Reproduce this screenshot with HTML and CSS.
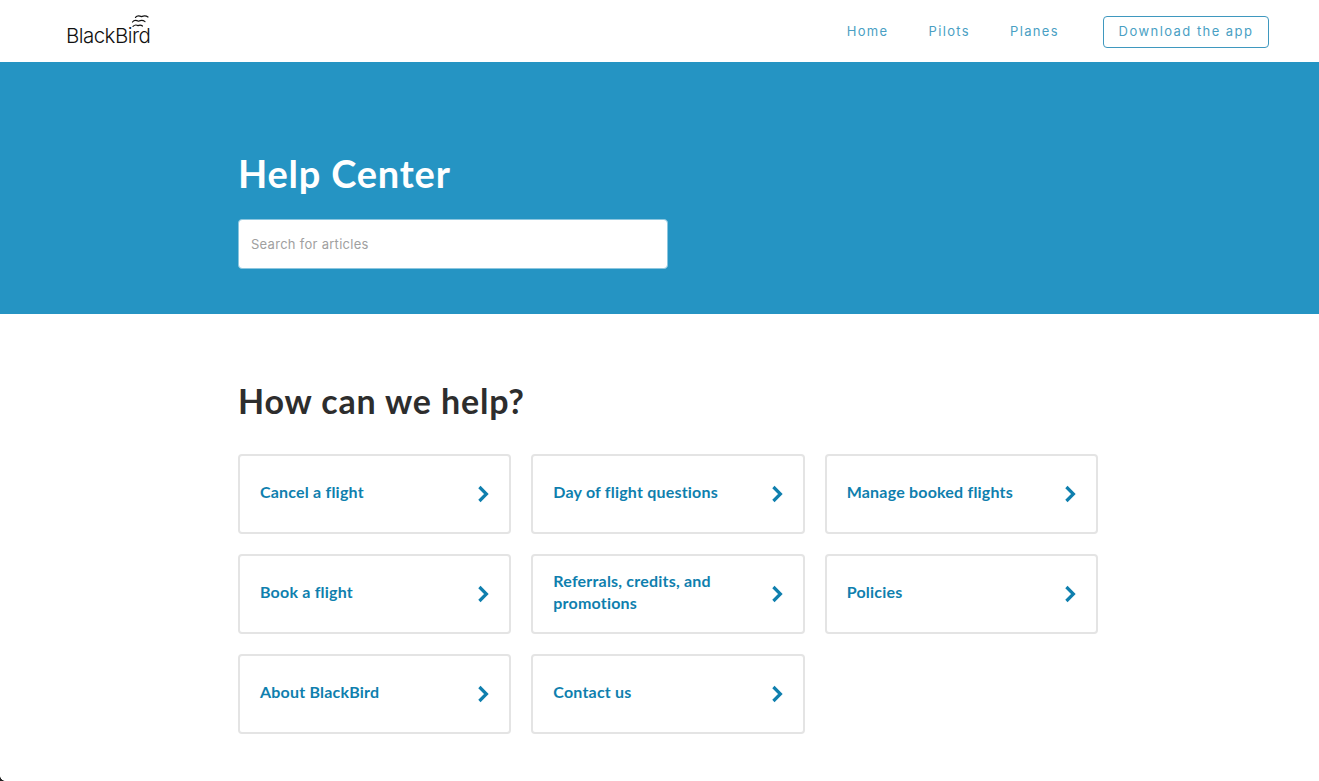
FILE: index.html
```html
<!DOCTYPE html>
<html lang="en">
<head>
<meta charset="utf-8">
<title>BlackBird Help Center</title>
<link rel="stylesheet" href="styles.css">
</head>
<body>
<header class="topbar">
  <a class="logo" href="#">
    <span class="logo-text">BlackBird</span>
    <svg class="logo-birds" width="20" height="15" viewBox="0 0 20 15" fill="none" stroke="#111" stroke-width="1.2" stroke-linecap="round">
      <path d="M5.5 3.4 C7 1.4 9 1.4 11.5 2.6 C14 1.4 16 1.4 18 3"/>
      <path d="M2.5 8 C4 6 6 6 8.5 7.2 C11 6 13 6 15 7.6"/>
      <path d="M3 12.4 C4.5 10.8 6.5 10.8 8 11.6 C9.5 10.8 11 10.8 12.5 12"/>
    </svg>
  </a>
  <nav class="nav">
    <a class="nav-link" href="#">Home</a>
    <a class="nav-link" href="#">Pilots</a>
    <a class="nav-link" href="#">Planes</a>
    <a class="nav-button" href="#">Download the app</a>
  </nav>
</header>
<section class="hero">
  <div class="inner">
    <h1 class="hero-title">Help Center</h1>
    <input class="search" type="text" placeholder="Search for articles">
  </div>
</section>
<main class="inner content">
  <h2 class="section-title">How can we help?</h2>
  <div class="grid">
    <a class="card" href="#"><span class="card-text">Cancel a flight</span><svg class="chev" width="12" height="18" viewBox="0 0 12 18"><path d="M2.4 2 L9.4 9 L2.4 16"/></svg></a>
    <a class="card" href="#"><span class="card-text">Day of flight questions</span><svg class="chev" width="12" height="18" viewBox="0 0 12 18"><path d="M2.4 2 L9.4 9 L2.4 16"/></svg></a>
    <a class="card" href="#"><span class="card-text">Manage booked flights</span><svg class="chev" width="12" height="18" viewBox="0 0 12 18"><path d="M2.4 2 L9.4 9 L2.4 16"/></svg></a>
    <a class="card" href="#"><span class="card-text">Book a flight</span><svg class="chev" width="12" height="18" viewBox="0 0 12 18"><path d="M2.4 2 L9.4 9 L2.4 16"/></svg></a>
    <a class="card" href="#"><span class="card-text">Referrals, credits, and promotions</span><svg class="chev" width="12" height="18" viewBox="0 0 12 18"><path d="M2.4 2 L9.4 9 L2.4 16"/></svg></a>
    <a class="card" href="#"><span class="card-text">Policies</span><svg class="chev" width="12" height="18" viewBox="0 0 12 18"><path d="M2.4 2 L9.4 9 L2.4 16"/></svg></a>
    <a class="card" href="#"><span class="card-text">About BlackBird</span><svg class="chev" width="12" height="18" viewBox="0 0 12 18"><path d="M2.4 2 L9.4 9 L2.4 16"/></svg></a>
    <a class="card" href="#"><span class="card-text">Contact us</span><svg class="chev" width="12" height="18" viewBox="0 0 12 18"><path d="M2.4 2 L9.4 9 L2.4 16"/></svg></a>
  </div>
</main>
<div class="corner"></div>
</body>
</html>
```
FILE: styles.css
```css
* { box-sizing: border-box; }
html, body { height: 100%; }
body {
  margin: 0;
  background: #fff;
  font-family: "Lato", "Liberation Sans", sans-serif;
  overflow: hidden;
}
a { text-decoration: none; }
.topbar {
  height: 62px;
  display: flex;
  align-items: center;
  justify-content: space-between;
  padding: 0 50px 0 66px;
}
.logo {
  position: relative;
  display: block;
  margin-top: 10px;
}
.logo-text {
  font-family: "Inter", "Liberation Sans", sans-serif;
  font-weight: 300;
  font-size: 20.5px;
  letter-spacing: -0.55px;
  color: #111;
  line-height: 24px;
  display: block;
}
.logo-birds {
  position: absolute;
  right: 0;
  top: -10px;
}
.nav {
  display: flex;
  align-items: center;
  margin-top: 1px;
  font-family: "Inter", "Liberation Sans", sans-serif;
  font-size: 13px;
  letter-spacing: 1.35px;
  color: #4a9fc4;
}
.nav-link {
  color: #4a9fc4;
  margin-right: 40px;
  padding-bottom: 2px;
}
.nav-link:nth-child(3) { margin-right: 44px; }
.nav-button {
  color: #4a9fc4;
  width: 166px;
  height: 32px;
  padding-bottom: 1px;
  border: 1.5px solid #3f98bf;
  border-radius: 4px;
  display: flex;
  align-items: center;
  justify-content: center;
  letter-spacing: 1.45px;
}
.hero {
  height: 252px;
  background: #2594c3;
  padding-top: 86px;
}
.inner {
  width: 860px;
  margin-left: 238px;
}
.hero-title {
  margin: 0 0 21px;
  font-size: 38px;
  line-height: 50px;
  font-weight: 700;
  letter-spacing: 0.8px;
  color: #fff;
}
.search {
  display: block;
  width: 430px;
  height: 50px;
  padding: 0 12px 1px;
  border: 1px solid #8cc6df;
  border-radius: 4px;
  background: #fff;
  font-family: "Inter", "Liberation Sans", sans-serif;
  font-size: 13px;
  letter-spacing: 0.28px;
  outline: none;
}
.search::placeholder { color: #a0a0a0; opacity: 1; }
.content { padding-top: 65px; }
.section-title {
  margin: 0 0 31px;
  font-size: 34px;
  line-height: 44px;
  font-weight: 700;
  letter-spacing: 0.85px;
  color: #2d2d2d;
}
.grid {
  display: grid;
  grid-template-columns: repeat(3, 1fr);
  gap: 20px;
}
.card {
  height: 80px;
  display: flex;
  align-items: center;
  justify-content: space-between;
  padding: 0 20px;
  border: 2px solid #e4e4e4;
  border-radius: 4px;
  background: #fff;
}
.card-text {
  max-width: 180px;
  margin-top: -4px;
  font-size: 16px;
  line-height: 22px;
  font-weight: 700;
  letter-spacing: 0.2px;
  color: #0f7fae;
}
.chev {
  flex: none;
  fill: none;
  stroke: #0f7fae;
  stroke-width: 3.2;
}
.corner {
  position: fixed;
  left: 0;
  bottom: 0;
  width: 5px;
  height: 5px;
  background: radial-gradient(circle at 100% 0, transparent 4.5px, #222 5px);
}
```
